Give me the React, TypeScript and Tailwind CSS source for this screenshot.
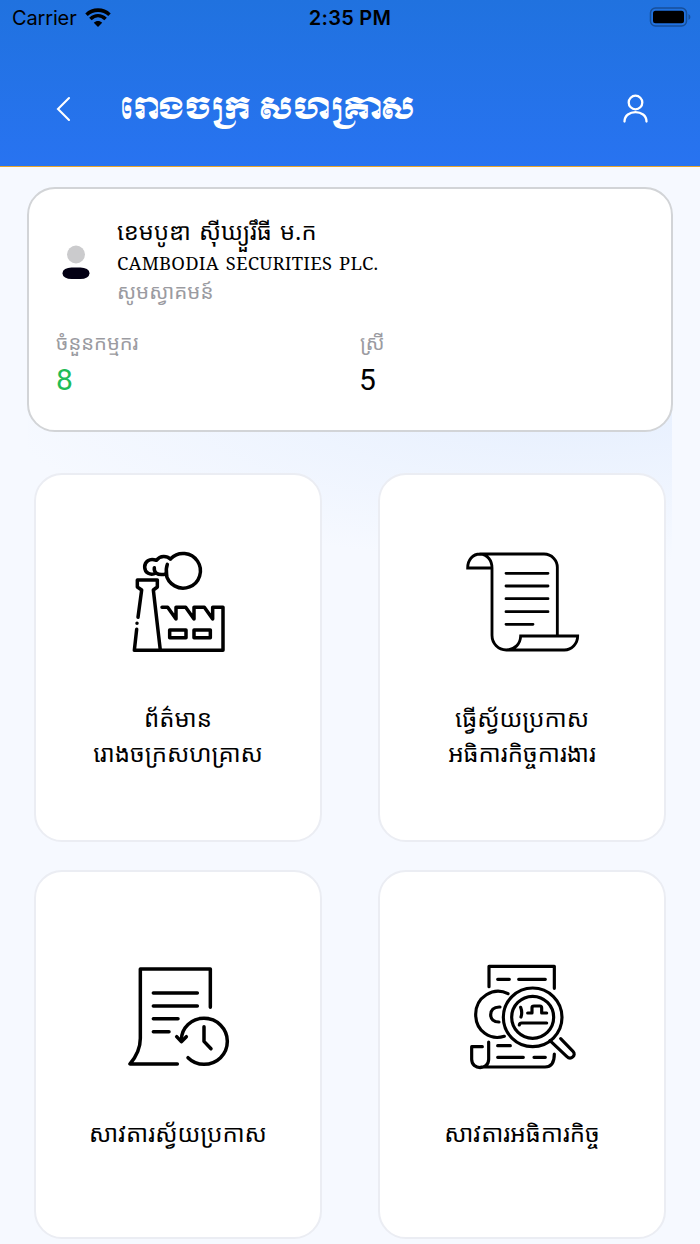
import type { ReactNode } from "react";

const khmer =
  "font-['Noto_Sans_Khmer','Khmer_OS_Siemreap','Khmer_OS','Noto_Sans',sans-serif]";

function Glyph({ width, children }: { width: number; children: ReactNode }) {
  return (
    <svg
      width={width}
      height={125}
      viewBox={`0 0 ${width * 3} 375`}
      fill="none"
      stroke="#000"
      strokeWidth={10.5}
      strokeLinecap="round"
      strokeLinejoin="round"
      aria-hidden="true"
    >
      {children}
    </svg>
  );
}

function FactoryIcon() {
  return (
    <Glyph width={120}>
      <path d="M151 57C141 47 121 45 109 61C88 53 74 65 74 81C74 98 91 108 108 99C115 104 126 105 138 102M142 73C138 83 138 94 140 105M103 83C102 90 104 95 108 99" />
      <path d="M152 56A52 52 0 1 1 138 101" />
      <path d="M54 232L65 150L52 141V120H112V141L100 150L121 331" />
      <path d="M51 250V250.1M50 268L43 331H309V202H278V237L253 202H222V237L197 202H168V237L143 202H126" />
      <path d="M149 270H198V293H149ZM222 270H271V293H222Z" />
    </Glyph>
  );
}

function ScrollIcon() {
  return (
    <Glyph width={135}>
      <g strokeWidth={8.5} strokeLinejoin="miter">
        <path d="M72 42H264C288 42 304 62 304 82V285M72 42C50 42 35 60 35 84H107M72 42C94 43 108 61 108 84V286C108 311 127 330 151 330H325C348 330 365 310 365 288H194C193 312 177 329 151 330" />
        <path d="M150 100H276M150 138H276M150 176H276M150 215H276M150 253H231" />
      </g>
    </Glyph>
  );
}

function HistoryIcon() {
  return (
    <Glyph width={120}>
      <path d="M271 157V42H61V250C61 280 47 307 30 327H172" />
      <path d="M100 114H232M100 153H232M100 191H174M100 230H147" />
      <path d="M184 256C184 218 215 190 252 190C292 190 322 222 322 259C322 298 291 328 252 328C233 328 217 321 204 308" />
      <path d="M170 245L184 260L199 245M252 215V259L273 281" />
    </Glyph>
  );
}

function InspectIcon() {
  return (
    <Glyph width={135}>
      <g strokeWidth={9.5}>
        <path d="M99 95V34H295V100M125 73H160M188 73H268" />
        <path d="M156 116C112 93 59 127 59 178C59 229 103 257 145 244M132 156C112 155 104 166 104 179C104 192 113 201 129 201" />
        <circle cx="230" cy="187" r="88" />
        <circle cx="230" cy="187" r="63" />
        <path d="M194 157C198 167 198 177 195 186M215 174H228V158Q228 153 234 153H252Q257 153 257 159V174H272M190 210Q191 204 197 204H272" />
        <path d="M282 257L332 304C345 317 362 300 351 289L314 251" />
        <path d="M79 275H47V313C47 346 98 346 98 313V261M75 336H267C286 336 295 322 295 297M125 272H163M125 307H202M234 307H268" />
      </g>
    </Glyph>
  );
}

function MenuCard({ icon, lines }: { icon: ReactNode; lines: string[] }) {
  return (
    <button
      type="button"
      className="flex h-[369px] w-[288px] flex-col items-center rounded-[28px] border-2 border-[#ebedf3] bg-white"
    >
      <span className={lines.length === 2 ? "mt-[65px] ml-[3px]" : "mt-[83px] ml-[3px]"}>{icon}</span>
      <span className={`mt-[35px] flex flex-col text-center text-[24px] leading-[35px] text-black ${khmer}`}>
        {lines.map((line) => (
          <span key={line} className="whitespace-nowrap">{line}</span>
        ))}
      </span>
    </button>
  );
}

export default function App() {
  return (
    <main className="flex h-[1244px] w-[700px] flex-col overflow-hidden bg-[#f6f9ff] text-black">
      <header className="flex h-[167px] shrink-0 flex-col border-b border-[#e5a52e] bg-linear-to-b from-[#2072df] to-[#2873f1]">
        <div className="grid h-[36px] grid-cols-3 items-center pr-[9px] pl-[12px] font-[Inter,sans-serif] text-[20px]">
          <div className="flex items-center gap-[8px]">
            <span className="tracking-[-0.15px]">Carrier</span>
            <svg className="-mt-[1px]" width="26" height="20" viewBox="0 0 26 20" fill="none" aria-hidden="true">
              <path d="M1.5 6.7C8 .6 18 .6 24.5 6.7M5.4 11C10 6.7 16 6.7 20.6 11" stroke="#000" strokeWidth="3.6" />
              <path d="M8.8 14.7C11.2 12.5 14.8 12.5 17.2 14.7L13 19Z" fill="#000" />
            </svg>
          </div>
          <span className="mr-[3px] text-center font-semibold tracking-[0.25px]">2:35 PM</span>
          <svg className="-mt-[2px] justify-self-end" width="42" height="20" viewBox="0 0 42 20" aria-hidden="true">
            <rect x="1.5" y="1" width="36" height="18" rx="5" fill="none" stroke="#174f99" strokeWidth="1.5" />
            <rect x="4" y="3.7" width="31" height="12.6" rx="2.5" />
            <path d="M39.5 7C42 8.5 42 11.5 39.5 13Z" fill="#174f99" />
          </svg>
        </div>
        <div className="flex h-[130px] items-center pr-[50px] pl-[55px]">
          <svg className="mt-[15px]" width="17" height="26" viewBox="0 0 17 26" fill="none" stroke="#fff" strokeWidth="2.1" strokeLinecap="round" aria-hidden="true">
            <path d="M14 2L3 13L14 24" />
          </svg>
          <h1 className="mt-[17px] ml-[48px] grow whitespace-nowrap font-['Khmer_OS_Muol_Light','Khmer_OS_Muol','Moul','Noto_Serif_Khmer',serif] text-[30.4px] leading-[50px] font-normal text-white">
            រោងចក្រ សហគ្រាស
          </h1>
          <svg className="mt-[15px]" width="30" height="32" viewBox="0 0 30 32" fill="none" stroke="#fff" strokeWidth="2.3" strokeLinecap="round" aria-hidden="true">
            <circle cx="15.5" cy="9.5" r="6.8" />
            <path d="M4.5 28.5C4.5 16 26.5 16 26.5 28.5" />
          </svg>
        </div>
      </header>

      <section className="z-10 mx-[27px] mt-[20px] h-[245px] shrink-0 rounded-[28px] border-2 border-[#d2d4d7] bg-white">
        <div className="flex h-[126px] pt-[26px] pl-[33px]">
          <svg className="mt-[29px]" width="28" height="36" viewBox="0 0 28 36" aria-hidden="true">
            <circle cx="14" cy="10.5" r="9" fill="#cbcbcd" />
            <rect x=".5" y="23.5" width="27" height="11.5" rx="9" ry="5.5" fill="#030014" />
          </svg>
          <div className={`-mt-[1px] ml-[27px] flex flex-col whitespace-nowrap ${khmer}`}>
            <p className="h-[35px] text-[23.7px] leading-[34px] [word-spacing:2px]">ខេមបូឌា ស៊ីឃ្យួរឹធី ម.ក</p>
            <p className="h-[27px] font-['Roboto_Slab','Noto_Serif','DejaVu_Serif',serif] text-[18.4px] leading-[27px] tracking-[0.2px] [word-spacing:2px]">
              CAMBODIA SECURITIES PLC.
            </p>
            <p className="h-[30px] text-[20.6px] leading-[30px] text-[#9b9ba1]">សូមស្វាគមន៍</p>
          </div>
        </div>
        <div className="grid grid-cols-[304px_1fr] pt-[10px] pl-[27px]">
          <div>
            <p className={`h-[35px] text-[20.2px] leading-[34px] text-[#9b9ba1] ${khmer}`}>ចំនួនកម្មករ</p>
            <p className="font-[Roboto,sans-serif] text-[30px] leading-[40px] text-[#1fbc57]">8</p>
          </div>
          <div>
            <p className={`h-[35px] text-[20.2px] leading-[34px] text-[#9b9ba1] ${khmer}`}>ស្រី</p>
            <p className="-ml-[1px] font-[Roboto,sans-serif] text-[30px] leading-[40px]">5</p>
          </div>
        </div>
      </section>

      <section className="mx-[28px] -mt-[30px] grid shrink-0 grid-cols-[288px_288px] gap-x-[56px] gap-y-[28px] bg-[radial-gradient(ellipse_90%_160px_at_85%_0,#e6effe,#f6f9ff)] pt-[71px] pl-[6px]">
        <MenuCard icon={<FactoryIcon />} lines={["ព័ត៌មាន", "រោងចក្រសហគ្រាស"]} />
        <MenuCard icon={<ScrollIcon />} lines={["ធ្វើស្វ័យប្រកាស", "អធិការកិច្ចការងារ"]} />
        <MenuCard icon={<HistoryIcon />} lines={["សាវតារស្វ័យប្រកាស"]} />
        <MenuCard icon={<InspectIcon />} lines={["សាវតារអធិការកិច្ច"]} />
      </section>
    </main>
  );
}
